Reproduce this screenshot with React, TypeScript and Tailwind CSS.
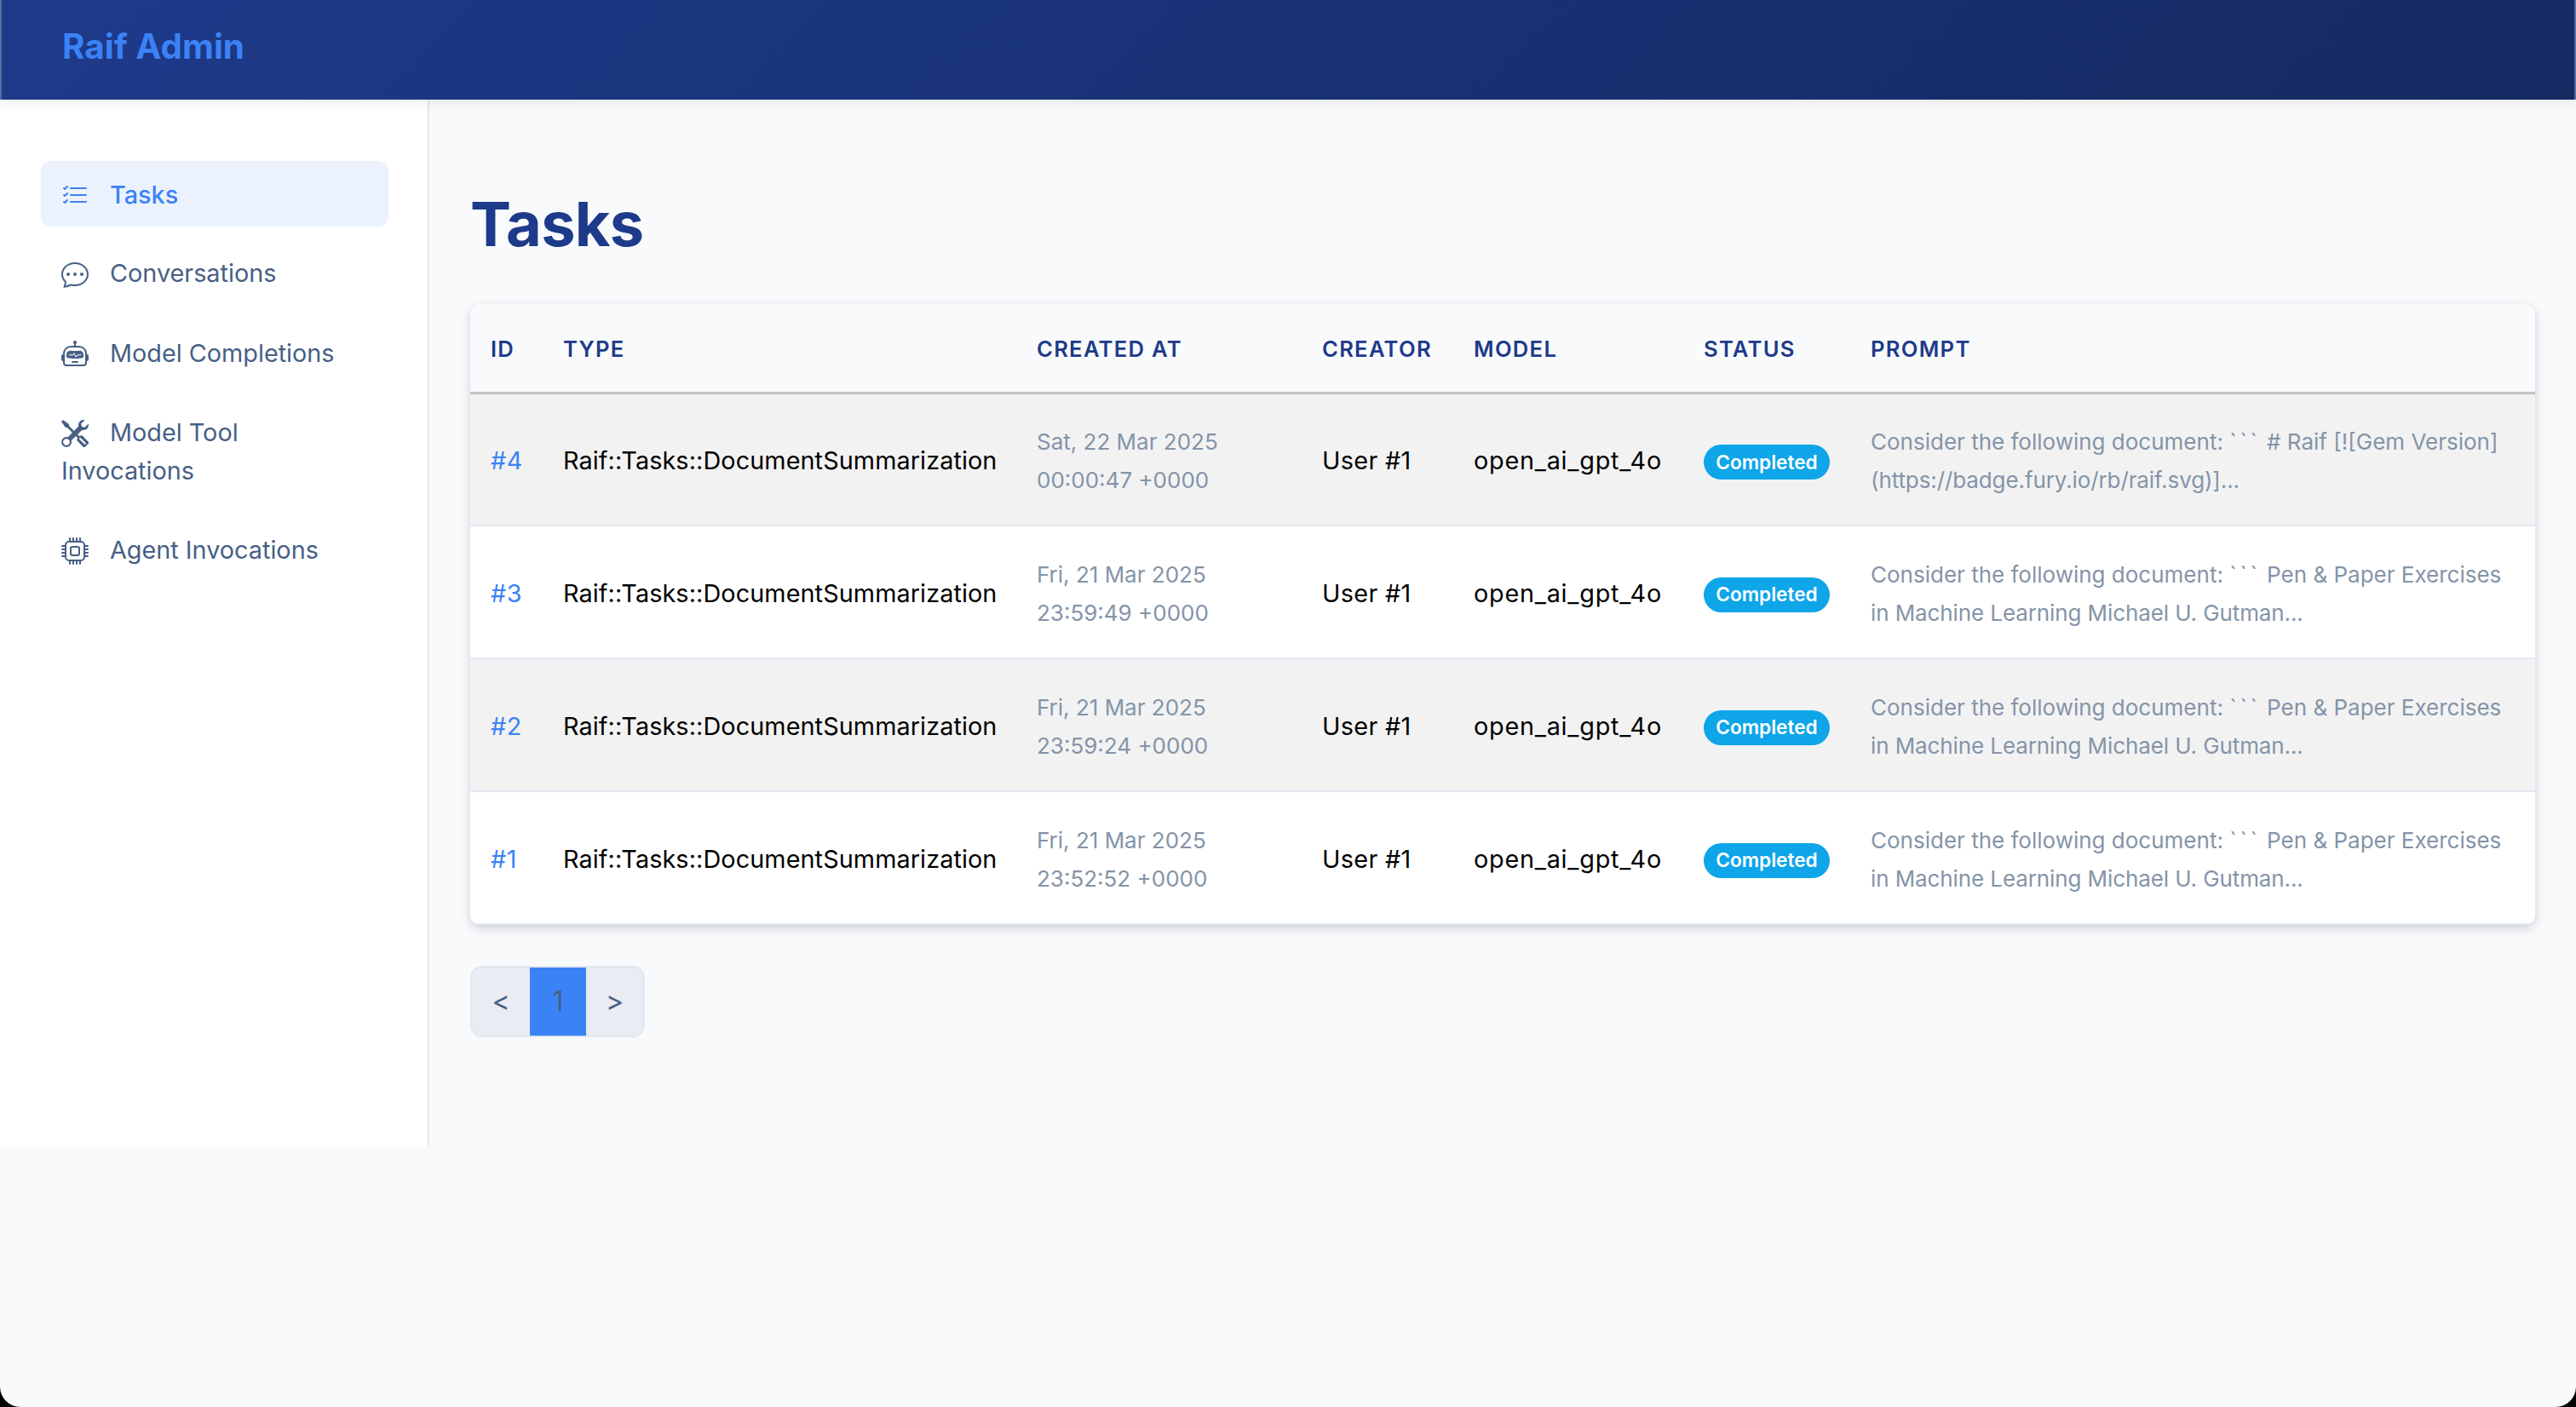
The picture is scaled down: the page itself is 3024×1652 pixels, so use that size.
import { BsListCheck, BsChatDots, BsRobot, BsTools, BsCpu } from "react-icons/bs";

const rows = [
  { id: "#4", d1: "Sat, 22 Mar 2025", d2: "00:00:47 +0000", p1: "# Raif [![Gem Version]", p2: "(https://badge.fury.io/rb/raif.svg)]..." },
  { id: "#3", d1: "Fri, 21 Mar 2025", d2: "23:59:49 +0000", p1: "Pen & Paper Exercises", p2: "in Machine Learning Michael U. Gutman..." },
  { id: "#2", d1: "Fri, 21 Mar 2025", d2: "23:59:24 +0000", p1: "Pen & Paper Exercises", p2: "in Machine Learning Michael U. Gutman..." },
  { id: "#1", d1: "Fri, 21 Mar 2025", d2: "23:52:52 +0000", p1: "Pen & Paper Exercises", p2: "in Machine Learning Michael U. Gutman..." },
];

const nav = [
  { label: "Conversations", Icon: BsChatDots },
  { label: "Model Completions", Icon: BsRobot },
  { label: "Model Tool Invocations", Icon: BsTools },
  { label: "Agent Invocations", Icon: BsCpu },
];

export default function App() {
  return (
    <div className="bg-black h-[1652px] w-[3024px] overflow-hidden">
      <div className="h-[1652px] bg-[#f8fafc] rounded-b-[24px] overflow-hidden font-['Inter',sans-serif]">
        <header className="h-[117px] flex items-center pl-[71px] pb-[7px] bg-[linear-gradient(135deg,#1e3a8a,#142a61)] border-x-2 border-[#5a6ba5] shadow-[0_4px_12px_rgba(0,0,0,0.08)] relative">
          <span className="text-[40.4px] font-bold text-[#3b82f6]">Raif Admin</span>
        </header>
        <div className="flex items-start">
          <aside className="w-[504px] h-[1229px] shrink-0 bg-white border-r-2 border-[#e2e8f0] pt-[72px] pl-[48px] pr-[46px]">
            <a className="block rounded-[12px] bg-[#ebf2fe] text-[#3b82f6] text-[28.8px] font-medium leading-[45px] px-[24px] pt-[17px] pb-[15px] mb-[16.4px]">
              <BsListCheck className="inline-block w-[32px] h-[32px] mr-[25px] align-[-7px]" />
              Tasks
            </a>
            {nav.map(({ label, Icon }) => (
              <a key={label} className="block rounded-[12px] text-[#475f85] text-[28.8px] leading-[45px] px-[24px] py-[16px] mb-[16.2px]">
                <Icon className="inline-block w-[32px] h-[32px] mr-[25px] align-[-7px]" />
                {label}
              </a>
            ))}
          </aside>
          <main className="flex-1 pt-[100px] px-[48px]">
            <h1 className="text-[72px] leading-[92px] font-bold text-[#1e3a8a] tracking-[-0.01em] mb-[48px]">Tasks</h1>
            <div className="rounded-[12px] overflow-hidden shadow-[0_4px_12px_rgba(15,23,42,0.18)]">
              <table className="w-full table-fixed border-collapse">
                <thead>
                  <tr className="bg-[#f8fafc] h-[104px] border-b-[3px] border-[#c4c4c4] text-left text-[#1e3a8a] text-[25.6px] font-semibold uppercase tracking-[0.05em]">
                    <th className="w-[85px] pl-[24px] pt-[3px] font-semibold">ID</th>
                    <th className="w-[556px] pl-[24px] pt-[3px] font-semibold">Type</th>
                    <th className="w-[335px] pl-[24px] pt-[3px] font-semibold">Created At</th>
                    <th className="w-[178px] pl-[24px] pt-[3px] font-semibold">Creator</th>
                    <th className="w-[270px] pl-[24px] pt-[3px] font-semibold">Model</th>
                    <th className="w-[196px] pl-[24px] pt-[3px] font-semibold">Status</th>
                    <th className="pl-[24px] pt-[3px] font-semibold">Prompt</th>
                  </tr>
                </thead>
                <tbody>
                  {rows.map((r, i) => (
                    <tr key={r.id} className={`h-[156px] border-b-2 border-[#e2e8f0] text-[28.8px] text-black ${i % 2 === 0 ? "bg-[#f2f2f2]" : "bg-white"}`}>
                      <td className="pl-[24px] pt-[3px] text-[#3b82f6] tracking-[0.4px]">{r.id}</td>
                      <td className="pl-[24px] pt-[3px] tracking-[0.09px]">Raif::Tasks::DocumentSummarization</td>
                      <td className="pl-[24px] pt-[3px] text-[26px] leading-[45px] text-[#8494a8]">
                        <div>{r.d1}</div>
                        <div>{r.d2}</div>
                      </td>
                      <td className="pl-[24px] pt-[3px] tracking-[0.33px]">User #1</td>
                      <td className="pl-[24px] pt-[3px] tracking-[0.77px]">open_ai_gpt_4o</td>
                      <td className="pl-[24px] pt-[3px]">
                        <span className="inline-flex items-center justify-center w-[148px] h-[41px] rounded-full bg-[#0ea5e9] text-white text-[22.6px] font-semibold tracking-normal align-middle">Completed</span>
                      </td>
                      <td className="pl-[24px] pt-[3px] text-[26px] leading-[45px] text-[#8494a8] whitespace-nowrap">
                        <div>
                          Consider the following document: <span className="tracking-[3.8px]">```</span> {r.p1}
                        </div>
                        <div className="tracking-[-0.1px]">{r.p2}</div>
                      </td>
                    </tr>
                  ))}
                </tbody>
              </table>
            </div>
            <nav className="mt-[48px] inline-flex h-[84px] rounded-[14px] overflow-hidden bg-[#e9ecf2] border-2 border-[#e2e8f0] text-[#475f85] text-[32px]">
              <span className="w-[68px] flex items-center justify-center">&lt;</span>
              <span className="w-[66px] -my-[2px] flex items-center justify-center bg-[#3b82f6]">1</span>
              <span className="w-[67px] flex items-center justify-center">&gt;</span>
            </nav>
          </main>
        </div>
      </div>
    </div>
  );
}
